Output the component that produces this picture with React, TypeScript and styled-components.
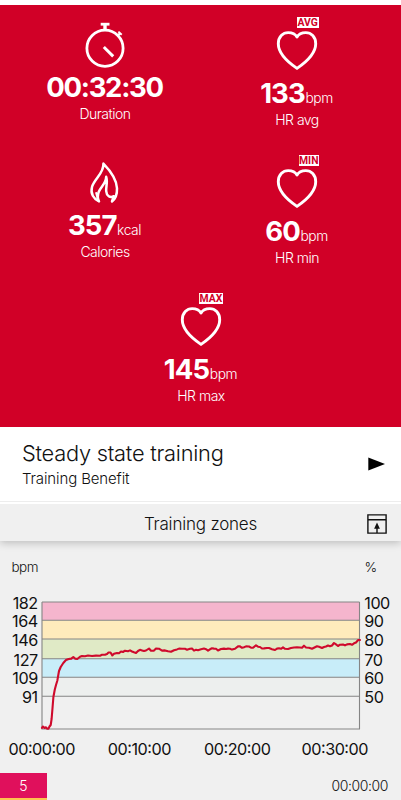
import React from "react";
import styled, { createGlobalStyle } from "styled-components";

const GlobalStyle = createGlobalStyle`
  *, *::before, *::after { box-sizing: border-box; }
  body {
    margin: 0;
    background: #fff;
    font-family: Inter, "Liberation Sans", sans-serif;
    color: #111;
  }
`;

const Screen = styled.main`
  width: 401px;
  height: 800px;
  padding-top: 5px;
  display: flex;
  flex-direction: column;
  overflow: hidden;
  background: #fff;
`;

const Summary = styled.section`
  flex: none;
  height: 421.5px;
  padding: 0 8px 0 9px;
  display: grid;
  grid-template-columns: 192px 192px;
  grid-auto-rows: 138px;
  background: #d10027;
  color: #fff;
`;

const Stat = styled.div<{ $wide?: boolean }>`
  grid-column: ${(p) => (p.$wide ? "1 / -1" : "auto")};
  display: flex;
  flex-direction: column;
  align-items: center;
`;

const StatIcon = styled.div<{ $tall?: boolean }>`
  position: relative;
  flex: none;
  width: 48px;
  height: ${(p) => (p.$tall ? 71 : 65)}px;
  svg { display: block; }
`;

const Badge = styled.span<{ $width: number }>`
  position: absolute;
  top: 12px;
  right: 2px;
  width: ${(p) => p.$width}px;
  height: 11px;
  background: #fff;
  color: #d10027;
  font: 700 10.4px/11.5px Roboto, sans-serif;
  text-align: center;
  white-space: nowrap;
`;

const Figure = styled.div<{ $tracking: number }>`
  height: 34px;
  padding-right: 1px;
  line-height: 34px;
  font-size: 27.5px;
  font-weight: 700;
  letter-spacing: ${(p) => p.$tracking}px;
  white-space: nowrap;
`;

const Unit = styled.span`
  margin-left: 0.6px;
  font-size: 13.8px;
  font-weight: 300;
  letter-spacing: -0.4px;
`;

const StatLabel = styled.div`
  height: 20px;
  line-height: 20px;
  font-size: 14px;
  font-weight: 300;
  letter-spacing: -0.5px;
`;

const Benefit = styled.section`
  flex: none;
  height: 75px;
  padding: 3px 16px 0 22px;
  display: flex;
  align-items: center;
  justify-content: space-between;
  border-bottom: 1px solid #ededed;
  svg { margin-bottom: 3px; }
`;

const BenefitTitle = styled.h1`
  margin: 0;
  font-size: 21.8px;
  line-height: 27px;
  font-weight: 300;
  letter-spacing: -0.24px;
`;

const BenefitText = styled.p`
  margin: 0;
  font-size: 15px;
  line-height: 23px;
  font-weight: 300;
  letter-spacing: -0.12px;
`;

const ZonesHeader = styled.header`
  flex: none;
  height: 37px;
  margin-top: 2.5px;
  padding: 2px 14px 0;
  display: grid;
  grid-template-columns: 20px 1fr 20px;
  align-items: center;
  background: #f0f0f0;
  box-shadow: 0 2px 8px rgba(0, 0, 0, 0.22);
  clip-path: inset(0 0 -16px 0);
  z-index: 1;
`;

const ZonesTitle = styled.h2`
  grid-column: 2;
  margin: 0;
  text-align: center;
  font-size: 17px;
  font-weight: 300;
  letter-spacing: -0.2px;
`;

const ZonesBody = styled.section`
  flex: 1;
  display: flex;
  flex-direction: column;
  background: #f0f0f0;
`;

const Chart = styled.svg`
  display: block;
  flex: none;
  font-family: Inter, sans-serif;
  fill: #111;
`;

const ZoneRow = styled.div`
  flex: none;
  height: 25px;
  display: flex;
  justify-content: space-between;
  align-items: center;
  padding-right: 13px;
  font-size: 14px;
  font-weight: 300;
  letter-spacing: -0.4px;
`;

const ZoneTag = styled.div`
  width: 46.5px;
  height: 25px;
  line-height: 26px;
  text-align: center;
  background: #e0105c;
  color: #fff;
  font-size: 14px;
`;

const NextZone = styled.div`
  flex: 1;
  width: 46.5px;
  background: #fdc24f;
`;

const Stopwatch = () => (
  <svg width="48" height="64" viewBox="0 0 48 64" fill="none" stroke="#fff">
    <circle cx="24" cy="43.2" r="18.1" strokeWidth="2.8" />
    <path d="M19.7 19.2h8.8" strokeWidth="2.8" />
    <path d="M24 19v6" strokeWidth="3.4" />
    <path d="M36.2 31.2l2.8-2.8" strokeWidth="2.2" />
    <path d="M37.4 26.6l3.3 3.2" strokeWidth="1.9" />
    <path d="M22.8 42l9.4 9.4" strokeWidth="3" />
  </svg>
);

const Flame = () => (
  <svg width="48" height="64" viewBox="0 0 48 64" fill="none" stroke="#fff">
    <path
      d="M18 58.4C12.6 56 9.2 50.6 11 44C13.2 36 23.2 30 22.4 20.6C28.8 27.2 35.6 36.6 36 45.2C36.2 51 34.4 55.8 31 58.4C31.6 56.4 32.3 54.8 32.8 53.2C29 55.2 25.6 53 25.2 48.2C24.8 44 26.9 39 25.2 33.8C25 40.8 20 43.4 17.8 48.8C16.4 52.2 16.8 55.8 18 58.4Z"
      strokeWidth="2.5"
      strokeLinejoin="round"
    />
    <path d="M15 49.2L17.4 58.2" strokeWidth="2" />
  </svg>
);

const Heart = () => (
  <svg width="48" height="70" viewBox="0 0 48 70" fill="none" stroke="#fff">
    <path
      d="M24 63.4C16.5 58.3 5.3 49.6 5.3 38.8C5.3 31.7 9.9 27.6 15.2 27.6C19.3 27.6 22.6 29.4 24 32C25.4 29.4 28.7 27.6 32.8 27.6C38.1 27.6 42.7 31.7 42.7 38.8C42.7 49.6 31.5 58.3 24 63.4Z"
      strokeWidth="2.9"
      strokeLinejoin="round"
    />
  </svg>
);

type StatItem = {
  value: string;
  unit?: string;
  label: string;
  icon: React.ReactNode;
  badge?: string;
  badgeWidth?: number;
  tracking: number;
  wide?: boolean;
};

const stats: StatItem[] = [
  { value: "00:32:30", label: "Duration", icon: <Stopwatch />, tracking: -1.3 },
  { value: "133", unit: "bpm", label: "HR avg", icon: <Heart />, badge: "AVG", badgeWidth: 22.5, tracking: -0.9 },
  { value: "357", unit: "kcal", label: "Calories", icon: <Flame />, tracking: -0.9 },
  { value: "60", unit: "bpm", label: "HR min", icon: <Heart />, badge: "MIN", badgeWidth: 20.5, tracking: -0.9 },
  { value: "145", unit: "bpm", label: "HR max", icon: <Heart />, badge: "MAX", badgeWidth: 24, tracking: -0.9, wide: true },
];

const zones = [
  { y: 61, bpm: "182", pct: "100", fill: "#f5b5cd" },
  { y: 79.3, bpm: "164", pct: "90", fill: "#ffebbc" },
  { y: 98, bpm: "146", pct: "80", fill: "#e0eac6" },
  { y: 117.8, bpm: "127", pct: "70", fill: "#c8edf9" },
  { y: 136.2, bpm: "109", pct: "60", fill: "#edefee" },
  { y: 155.2, bpm: "91", pct: "50", fill: "#f0f0f0" },
];
const baseline = 188;

const times = [
  { x: 42, label: "00:00:00", width: 67 },
  { x: 139.6, label: "00:10:00", width: 63.5 },
  { x: 237.5, label: "00:20:00", width: 67 },
  { x: 335, label: "00:30:00", width: 67 },
];

const heartRate =
  "42,186.8 43,185.5 44.5,187 46,186.3 47,187.6 48.5,187.6 49.5,185.5 50.7,184 51.6,178 52.6,166 53.4,156 54.8,148.5 56,144 57.3,139.7 58.3,134 59,130 60.7,126 63.3,122 66,119 68.7,118 71.3,117.6 73.3,116 75,117.6 77.3,118 80,115.8 82,115 85,115.2 88,114.5 92,115 96,114.6 100,114.7 102,113.8 105,113.8 107,113 108.5,111.5 110.5,111.5 112.3,114.4 114,112.8 117,112 119,112.3 121,110.5 123,111 125,109.7 128,110.2 130,109.4 132,110.5 134,111.3 136,112 138,110 140,108.8 142,109.4 144,110 146,109.5 149,107.5 151,109.8 154,109.6 156,107.6 159,107.7 162,109.6 165,109.4 168,110.3 171,110.8 174,109.2 177,108.4 179,107.6 182,107.8 185,107.8 187,108.7 190,107.8 192,107.5 194,109.6 196,108.7 198,109.2 201,108.3 204,107.6 206,108.2 208,109.6 210,108.3 212,107.3 214,107.6 216,107.7 218,109.5 221,108 224,107.6 226,108 228,107.6 230,107.8 232,108.6 235,107.8 238,105.4 240,105.3 242,106.8 244,106.2 246,105.4 249,105.5 251,106.6 253,106.8 256,104.3 258,105.7 260,106 262,107.5 264,107.4 267,107 269,107 272,108.2 275,109 277,107.6 279,107.3 281,107.8 283,106.3 285,107.8 288,108 291,107 294,106.5 297,106.4 300,106.5 302,106.8 304,104.7 306,106.5 309,106.8 312,107.8 315,106.2 317,105.2 319,105.7 322,107 324,106 326,105.5 328,104.5 330,105.3 332,104.5 334,102 336,103.4 338,105 340,103.7 343,103.5 345,104.4 347,103.4 350,103 352,103.8 354,102.3 356,101.5 358,99.1 360,99";

export default function App() {
  return (
    <>
      <GlobalStyle />
      <Screen>
        <Summary>
          {stats.map((s) => (
            <Stat key={s.label} $wide={s.wide}>
              <StatIcon $tall={!!s.badge}>
                {s.icon}
                {s.badge && <Badge $width={s.badgeWidth ?? 22}>{s.badge}</Badge>}
              </StatIcon>
              <Figure $tracking={s.tracking}>
                {s.value}
                {s.unit && <Unit>{s.unit}</Unit>}
              </Figure>
              <StatLabel>{s.label}</StatLabel>
            </Stat>
          ))}
        </Summary>

        <Benefit>
          <div>
            <BenefitTitle>Steady state training</BenefitTitle>
            <BenefitText>Training Benefit</BenefitText>
          </div>
          <svg width="17" height="14" viewBox="0 0 17 14">
            <path d="M0.3 0.4L17 7L0.3 13.6Z" fill="#000" />
          </svg>
        </Benefit>

        <ZonesHeader>
          <ZonesTitle>Training zones</ZonesTitle>
          <svg width="20" height="20" viewBox="0 0 20 20" fill="none" stroke="#111" strokeWidth="1.4">
            <path d="M0.9 0.9h18.2v18.2h-18.2zM0.9 5.8h18.2M10 19v-6" />
            <path d="M10 8.4l2.9 6.3h-5.8z" fill="#111" stroke="none" />
          </svg>
        </ZonesHeader>

        <ZonesBody>
          <Chart width="401" height="232" viewBox="0 0 401 232">
            <g fontSize="13.5" fontWeight="300">
              <text x="11.5" y="31.3" textLength="27">bpm</text>
              <text x="364.5" y="31.3">%</text>
            </g>
            {zones.map((z, i) => (
              <rect key={z.bpm} x="42" y={z.y} width="317.5" height={(zones[i + 1]?.y ?? baseline) - z.y} fill={z.fill} />
            ))}
            <g stroke="#858585" strokeWidth="1.1">
              {zones.map((z) => (
                <path key={z.bpm} d={`M42 ${z.y}H359.5`} />
              ))}
              <path d={`M42 61V${baseline}H359.5V61`} fill="none" />
            </g>
            <g fontSize="16.2" fontWeight="400">
              {zones.map((z) => (
                <React.Fragment key={z.bpm}>
                  <text x="37.7" y={z.y + 6.7} textAnchor="end" letterSpacing="-0.5">{z.bpm}</text>
                  <text x="364.3" y={z.y + 6.7} letterSpacing="-0.5">{z.pct}</text>
                </React.Fragment>
              ))}
              {times.map((t) => (
                <text key={t.label} x={t.x} y="214" textAnchor="middle" textLength={t.width}>{t.label}</text>
              ))}
            </g>
            <polyline points={heartRate} fill="none" stroke="#cf0a2c" strokeWidth="2.1" strokeLinejoin="round" strokeLinecap="round" />
          </Chart>
          <ZoneRow>
            <ZoneTag>5</ZoneTag>
            <span>00:00:00</span>
          </ZoneRow>
          <NextZone />
        </ZonesBody>
      </Screen>
    </>
  );
}
